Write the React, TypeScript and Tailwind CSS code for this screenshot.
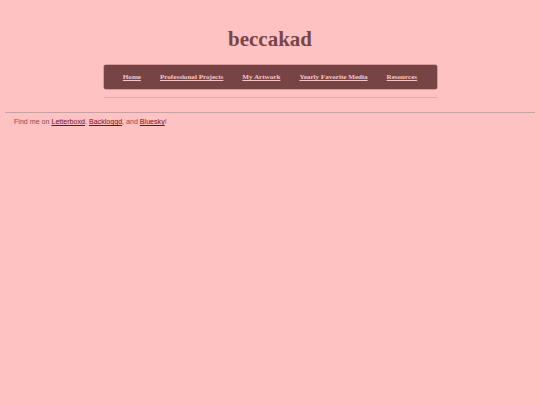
export default function App() {
  const links = ["Home", "Professional Projects", "My Artwork", "Yearly Favorite Media", "Resources"];
  return (
    <div className="min-h-[405px] w-full bg-[#fec2c2]">
      <div className="flex flex-col items-center pt-[25px]">
        <h1 className="text-[21px] font-bold leading-[28px] text-[#7a4547] [font-family:'Liberation_Serif',serif]">beccakad</h1>
        <nav className="mt-[12px] flex h-[24px] w-[333px] items-center justify-center gap-[19px] rounded-[2px] bg-[#774446] pt-px shadow-[0_0_0_0.5px_#b07070]">
          {links.map((l) => (
            <a key={l} href="#" className="text-[7.1px] font-bold text-[#f8c4c8] underline [font-family:'Liberation_Serif',serif]">
              {l}
            </a>
          ))}
        </nav>
        <div className="mt-[8px] h-px w-[333px] bg-[#dba9ab]" />
      </div>
      <div className="mx-[5px] mt-[14px] h-px bg-[#c9a2a4]" />
      <p className="mt-[4px] px-[14px] text-[7.1px] leading-[10px] text-[#8e4a52] [font-family:'Liberation_Sans',sans-serif]">
        Find me on <a href="#" className="text-[#7d0c1c] underline">Letterboxd</a>, <a href="#" className="text-[#7d0c1c] underline">Backloggd</a>, and <a href="#" className="text-[#7d0c1c] underline">Bluesky</a>!
      </p>
    </div>
  );
}
